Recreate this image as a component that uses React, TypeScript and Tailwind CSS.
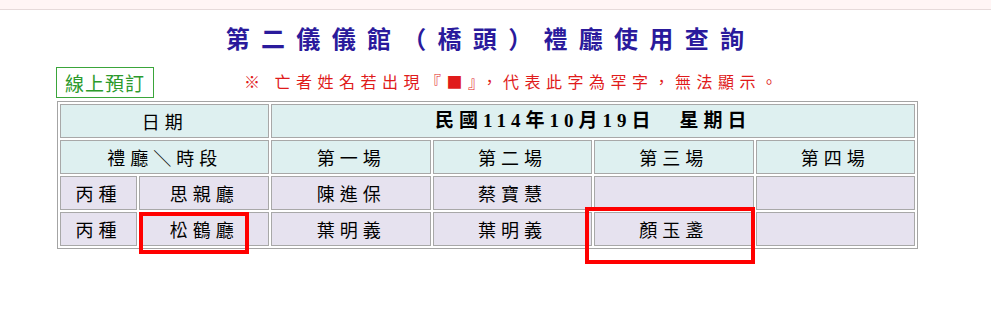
const cjk = "font-['Noto_Sans_CJK_TC','Noto_Sans',sans-serif]";

type Row = { kind: string; hall: string; slots: string[] };

const rows: Row[] = [
  { kind: '丙種', hall: '思親廳', slots: ['陳進保', '蔡寶慧', '', ''] },
  { kind: '丙種', hall: '松鶴廳', slots: ['葉明義', '葉明義', '顏玉盞', ''] },
];

const slotNames = ['第一場', '第二場', '第三場', '第四場'];

const head = 'border border-[#a8a8a8] bg-[#def0f0] h-[34px] p-0 text-center align-middle';
const body = 'border border-[#a8a8a8] bg-[#e6e2ef] h-[34px] p-0 text-center align-middle';

export default function App() {
  return (
    <div className={`relative w-[991px] min-h-[329px] bg-white text-black ${cjk}`}>
      <div className="h-[10px] border-b border-[#e6dada] bg-[#fff5f5]" />

      <div className="w-[975px]">
        <h1 className="mt-[12px] pl-[6px] text-center text-[24px] leading-[32px] font-bold tracking-[11.3px] text-[#2a1a9c]">
          第二儀儀館（橋頭）禮廳使用查詢
        </h1>

        <div className="mt-[13px] flex items-center">
          <a className="ml-[56px] flex h-[31px] w-[98px] items-center justify-center border border-[#3aa53a] text-[19px] leading-none tracking-[1px] text-[#2c9a2c]">
            線上預訂
          </a>
          <p className="ml-[90px] -mt-[3px] text-[16px] leading-none tracking-[5.5px] text-[#e01b1b]">
            ※ 亡者姓名若出現『■』，代表此字為罕字，無法顯示。
          </p>
        </div>

        <table className="mx-auto mt-[3px] w-[861px] table-fixed border-separate border-spacing-[2px] border border-[#a4a4a4] text-[18px] tracking-[5px]">
          <colgroup>
            <col className="w-[77px]" />
            <col className="w-[130px]" />
            <col className="w-[159px]" />
            <col className="w-[159px]" />
            <col className="w-[159px]" />
            <col className="w-[159px]" />
          </colgroup>
          <tbody>
            <tr>
              <td colSpan={2} className={head}>日期</td>
              <td colSpan={4} className={`${head} text-[19px] font-bold tracking-[5px] font-['Liberation_Serif','Noto_Sans_CJK_TC',serif]`}>
                民國114年10月19日　星期日
              </td>
            </tr>
            <tr>
              <td colSpan={2} className={head}>禮廳＼時段</td>
              {slotNames.map((s) => (
                <td key={s} className={head}>{s}</td>
              ))}
            </tr>
            {rows.map((r) => (
              <tr key={r.hall}>
                <td className={body}>{r.kind}</td>
                <td className={body}>{r.hall}</td>
                {r.slots.map((name, i) => (
                  <td key={i} className={body}>{name}</td>
                ))}
              </tr>
            ))}
          </tbody>
        </table>
      </div>

      {/* red highlight frames drawn over the table */}
      <div className="pointer-events-none absolute left-[139px] top-[212px] h-[42px] w-[110px] border-4 border-[#ff0000]" />
      <div className="pointer-events-none absolute left-[585px] top-[207px] h-[57px] w-[170px] border-4 border-[#ff0000]" />
    </div>
  );
}
